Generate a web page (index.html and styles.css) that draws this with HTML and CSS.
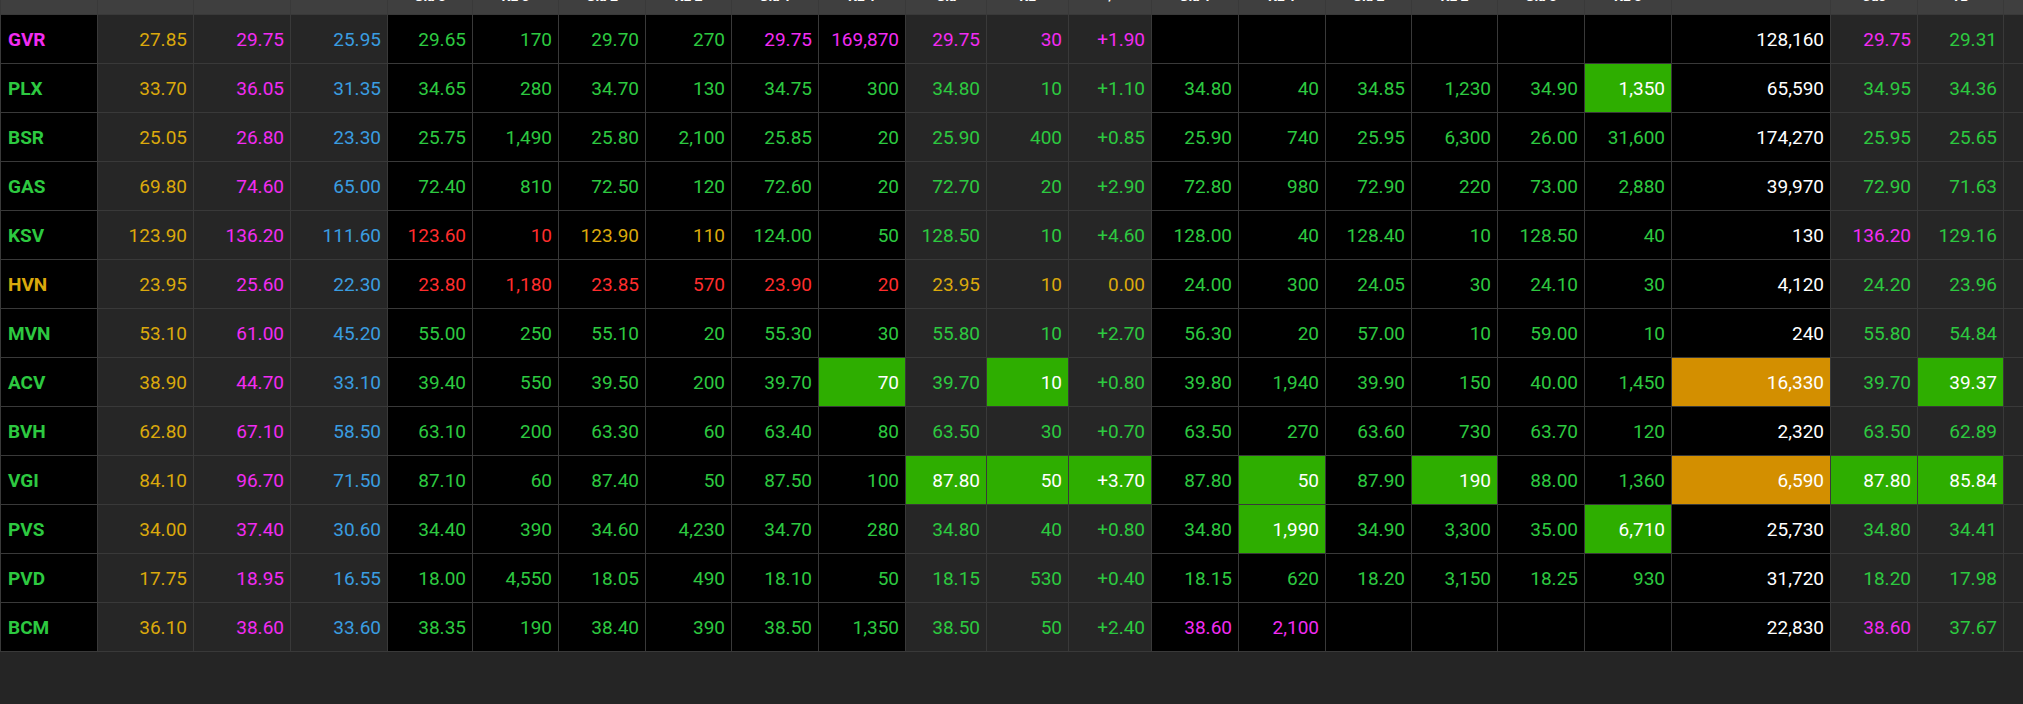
FILE: index.html
```html
<!DOCTYPE html>
<html lang="vi">
<head>
<meta charset="utf-8">
<title>Bảng giá</title>
<link rel="stylesheet" href="styles.css">
</head>
<body>
<div class="viewport">
<div class="board">
  <div class="row head">
    <div class="h up2"><span>Mã CK</span></div><div class="h up2"><span>TC</span></div><div class="h up2"><span>Trần</span></div><div class="h up2"><span>Sàn</span></div>
    <div class="h"><span>Giá 3</span></div><div class="h"><span>KL 3</span></div><div class="h"><span>Giá 2</span></div><div class="h"><span>KL 2</span></div><div class="h"><span>Giá 1</span></div><div class="h"><span>KL 1</span></div>
    <div class="h"><span>Giá</span></div><div class="h"><span>KL</span></div><div class="h"><span>+/-</span></div>
    <div class="h"><span>Giá 1</span></div><div class="h"><span>KL 1</span></div><div class="h"><span>Giá 2</span></div><div class="h"><span>KL 2</span></div><div class="h"><span>Giá 3</span></div><div class="h"><span>KL 3</span></div>
    <div class="h up2"><span>Tổng KL</span></div><div class="h"><span>Cao</span></div><div class="h"><span>TB</span></div><div class="h up2"><span>Thấp</span></div>
  </div>

  <div class="row">
    <div class="sym m">GVR</div><div>27.85</div><div>29.75</div><div>25.95</div>
    <div>29.65</div><div>170</div><div>29.70</div><div>270</div><div class="m">29.75</div><div class="m">169,870</div>
    <div class="m">29.75</div><div class="m">30</div><div class="m">+1.90</div>
    <div></div><div></div><div></div><div></div><div></div><div></div>
    <div>128,160</div><div class="m">29.75</div><div>29.31</div><div></div>
  </div>

  <div class="row">
    <div class="sym">PLX</div><div>33.70</div><div>36.05</div><div>31.35</div>
    <div>34.65</div><div>280</div><div>34.70</div><div>130</div><div>34.75</div><div>300</div>
    <div>34.80</div><div>10</div><div>+1.10</div>
    <div>34.80</div><div>40</div><div>34.85</div><div>1,230</div><div>34.90</div><div class="hg">1,350</div>
    <div>65,590</div><div>34.95</div><div>34.36</div><div></div>
  </div>

  <div class="row">
    <div class="sym">BSR</div><div>25.05</div><div>26.80</div><div>23.30</div>
    <div>25.75</div><div>1,490</div><div>25.80</div><div>2,100</div><div>25.85</div><div>20</div>
    <div>25.90</div><div>400</div><div>+0.85</div>
    <div>25.90</div><div>740</div><div>25.95</div><div>6,300</div><div>26.00</div><div>31,600</div>
    <div>174,270</div><div>25.95</div><div>25.65</div><div></div>
  </div>

  <div class="row">
    <div class="sym">GAS</div><div>69.80</div><div>74.60</div><div>65.00</div>
    <div>72.40</div><div>810</div><div>72.50</div><div>120</div><div>72.60</div><div>20</div>
    <div>72.70</div><div>20</div><div>+2.90</div>
    <div>72.80</div><div>980</div><div>72.90</div><div>220</div><div>73.00</div><div>2,880</div>
    <div>39,970</div><div>72.90</div><div>71.63</div><div></div>
  </div>

  <div class="row">
    <div class="sym">KSV</div><div>123.90</div><div>136.20</div><div>111.60</div>
    <div class="d">123.60</div><div class="d">10</div><div class="y">123.90</div><div class="y">110</div><div>124.00</div><div>50</div>
    <div>128.50</div><div>10</div><div>+4.60</div>
    <div>128.00</div><div>40</div><div>128.40</div><div>10</div><div>128.50</div><div>40</div>
    <div>130</div><div class="m">136.20</div><div>129.16</div><div></div>
  </div>

  <div class="row">
    <div class="sym y">HVN</div><div>23.95</div><div>25.60</div><div>22.30</div>
    <div class="d">23.80</div><div class="d">1,180</div><div class="d">23.85</div><div class="d">570</div><div class="d">23.90</div><div class="d">20</div>
    <div class="y">23.95</div><div class="y">10</div><div class="y">0.00</div>
    <div>24.00</div><div>300</div><div>24.05</div><div>30</div><div>24.10</div><div>30</div>
    <div>4,120</div><div>24.20</div><div>23.96</div><div></div>
  </div>

  <div class="row">
    <div class="sym">MVN</div><div>53.10</div><div>61.00</div><div>45.20</div>
    <div>55.00</div><div>250</div><div>55.10</div><div>20</div><div>55.30</div><div>30</div>
    <div>55.80</div><div>10</div><div>+2.70</div>
    <div>56.30</div><div>20</div><div>57.00</div><div>10</div><div>59.00</div><div>10</div>
    <div>240</div><div>55.80</div><div>54.84</div><div></div>
  </div>

  <div class="row">
    <div class="sym">ACV</div><div>38.90</div><div>44.70</div><div>33.10</div>
    <div>39.40</div><div>550</div><div>39.50</div><div>200</div><div>39.70</div><div class="hg">70</div>
    <div>39.70</div><div class="hg">10</div><div>+0.80</div>
    <div>39.80</div><div>1,940</div><div>39.90</div><div>150</div><div>40.00</div><div>1,450</div>
    <div class="ho">16,330</div><div>39.70</div><div class="hg">39.37</div><div></div>
  </div>

  <div class="row">
    <div class="sym">BVH</div><div>62.80</div><div>67.10</div><div>58.50</div>
    <div>63.10</div><div>200</div><div>63.30</div><div>60</div><div>63.40</div><div>80</div>
    <div>63.50</div><div>30</div><div>+0.70</div>
    <div>63.50</div><div>270</div><div>63.60</div><div>730</div><div>63.70</div><div>120</div>
    <div>2,320</div><div>63.50</div><div>62.89</div><div></div>
  </div>

  <div class="row">
    <div class="sym">VGI</div><div>84.10</div><div>96.70</div><div>71.50</div>
    <div>87.10</div><div>60</div><div>87.40</div><div>50</div><div>87.50</div><div>100</div>
    <div class="hg">87.80</div><div class="hg">50</div><div class="hg">+3.70</div>
    <div>87.80</div><div class="hg">50</div><div>87.90</div><div class="hg">190</div><div>88.00</div><div>1,360</div>
    <div class="ho">6,590</div><div class="hg">87.80</div><div class="hg">85.84</div><div></div>
  </div>

  <div class="row">
    <div class="sym">PVS</div><div>34.00</div><div>37.40</div><div>30.60</div>
    <div>34.40</div><div>390</div><div>34.60</div><div>4,230</div><div>34.70</div><div>280</div>
    <div>34.80</div><div>40</div><div>+0.80</div>
    <div>34.80</div><div class="hg">1,990</div><div>34.90</div><div>3,300</div><div>35.00</div><div class="hg">6,710</div>
    <div>25,730</div><div>34.80</div><div>34.41</div><div></div>
  </div>

  <div class="row">
    <div class="sym">PVD</div><div>17.75</div><div>18.95</div><div>16.55</div>
    <div>18.00</div><div>4,550</div><div>18.05</div><div>490</div><div>18.10</div><div>50</div>
    <div>18.15</div><div>530</div><div>+0.40</div>
    <div>18.15</div><div>620</div><div>18.20</div><div>3,150</div><div>18.25</div><div>930</div>
    <div>31,720</div><div>18.20</div><div>17.98</div><div></div>
  </div>

  <div class="row">
    <div class="sym">BCM</div><div>36.10</div><div>38.60</div><div>33.60</div>
    <div>38.35</div><div>190</div><div>38.40</div><div>390</div><div>38.50</div><div>1,350</div>
    <div>38.50</div><div>50</div><div>+2.40</div>
    <div class="m">38.60</div><div class="m">2,100</div><div></div><div></div><div></div><div></div>
    <div>22,830</div><div class="m">38.60</div><div>37.67</div><div></div>
  </div>
</div>
</div>
</body>
</html>
```

FILE: styles.css
```css
html, body {
  margin: 0;
  padding: 0;
  background: #252525;
}

.viewport {
  width: 100vw;
  height: 100vh;
  overflow: hidden;
}

.board {
  display: flex;
  flex-direction: column;
  gap: 1px;
  width: max-content;
  padding: 0 0 1px 1px;
  background: #393939;
  font-family: Roboto, "Liberation Sans", Arial, sans-serif;
  font-size: 19px;
  color: #2dc940;
}

.row {
  display: grid;
  grid-template-columns: 96px 95px 96px 96px 84px 85px 86px 85px 86px 86px 80px 81px 82px 86px 86px 85px 85px 86px 86px 158px 86px 85px 100px;
  grid-auto-rows: 48px;
  gap: 1px;
}

.row > div {
  display: flex;
  align-items: center;
  justify-content: flex-end;
  padding-right: 6px;
  background: #000;
  white-space: nowrap;
  overflow: hidden;
}

/* gray column groups */
.row > div:nth-child(2),
.row > div:nth-child(3),
.row > div:nth-child(4),
.row > div:nth-child(11),
.row > div:nth-child(12),
.row > div:nth-child(13),
.row > div:nth-child(21),
.row > div:nth-child(22),
.row > div:nth-child(23) {
  background: #262626;
}

/* fixed column colours */
.row > div:nth-child(2) { color: #dba90c; }
.row > div:nth-child(3) { color: #f22cf2; }
.row > div:nth-child(4) { color: #3a9de0; }
.row > div:nth-child(20) { color: #ffffff; }

/* header: scrolled almost out of view, only the bottoms of the labels remain */
.row.head {
  grid-auto-rows: 14px;
}

.row.head > div.h {
  display: block;
  background: #3f3f3f;
  color: #ffffff;
  padding-right: 0;
  text-align: center;
  font-size: 14px;
  font-weight: 700;
}

.row.head > div.h > span {
  display: block;
  line-height: 16px;
  margin-top: -12px;
}

.row.head > div.h.up2 > span {
  margin-top: -24px;
}

/* symbol */
.row > div.sym {
  justify-content: flex-start;
  padding-left: 7px;
  padding-right: 0;
  font-weight: 700;
  color: #2dc940;
}

/* state colours */
.row > div.m { color: #f22cf2; }
.row > div.y { color: #dba90c; }
.row > div.d { color: #ff2d2d; }

/* highlighted cells */
.row > div.hg {
  background: #2eae00;
  color: #ffffff;
}

.row > div.ho {
  background: #d38f00;
  color: #ffffff;
}
```
